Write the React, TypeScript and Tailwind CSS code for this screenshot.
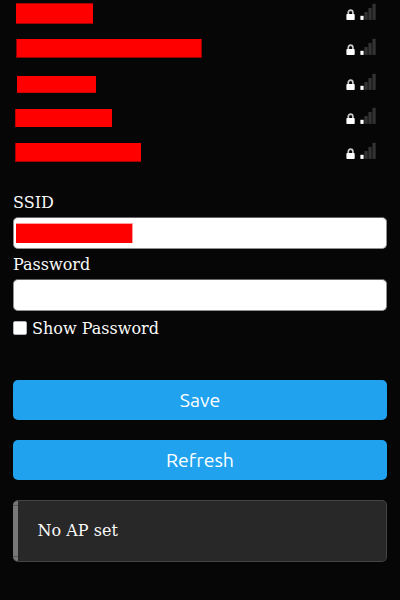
const networks = [
  { row: 'h-[25px]', bar: 'mt-[3px] ml-4 h-[21px] w-[77px] border-y border-[#a80000]' },
  { row: 'h-[35px]', bar: 'mt-[14px] ml-4 h-[19px] w-[186px] border-x border-b border-[#900000]' },
  { row: 'h-[35px]', bar: 'mt-4 ml-[17px] h-[17px] w-[79px] border-b border-[#d80000]' },
  { row: 'h-[34px]', bar: 'mt-[14px] ml-[15px] h-[18px] w-[97px] border-l border-[#c00000]' },
  { row: 'h-[35px]', bar: 'mt-[14px] ml-[15px] h-[19px] w-[126px] border-l border-b border-[#a80000]' },
];

function Lock() {
  return (
    <svg width="9" height="11" viewBox="0 0 9 11" className="mr-[5px]">
      <path d="M2.3 6V3.6a2.3 2.5 0 0 1 4.6 0V6" fill="none" stroke="#c8c8c8" strokeWidth="1.7" />
      <rect x="0.4" y="5" width="8.3" height="6" rx="0.8" fill="#fff" />
    </svg>
  );
}

function Signal() {
  return (
    <svg width="16" height="17" viewBox="0 0 16 17">
      <rect x="0.4" y="12.8" width="3.2" height="4.1" fill="#fff" />
      <rect x="4.4" y="9" width="3.3" height="7.9" fill="#333" />
      <rect x="8.4" y="5" width="3.3" height="11.9" fill="#333" />
      <rect x="12.4" y="0.8" width="3.3" height="16.1" fill="#333" />
    </svg>
  );
}

export default function App() {
  return (
    <div className="h-[600px] w-[400px] overflow-hidden bg-[#060606] text-base leading-[19px] text-[#fafafa] [font-family:'DejaVu_Serif',serif]">
      <div>
        {networks.map((n, i) => (
          <div key={i} className={`flex items-start justify-between pr-6 ${n.row}`}>
            <div className={`shrink-0 bg-[#ff0000] ${n.bar}`} />
            <div className="flex items-end self-end pb-[5px]">
              <Lock />
              <Signal />
            </div>
          </div>
        ))}
      </div>
      <form className="px-[13px] pt-[29px]" onSubmit={(e) => e.preventDefault()}>
        <label className="block h-6">SSID</label>
        <div className="flex h-8 items-center rounded-[5px] border border-[#909090] border-t-[#666] bg-white pl-0.5">
          <div className="h-5 w-[117px] border-t border-r border-[#ffa0a0] bg-[#ff0000]" />
        </div>
        <label className="mt-[6px] block h-6">Password</label>
        <input type="password" className="block h-8 w-full rounded-[5px] border border-[#909090] border-t-[#666] bg-white px-2 text-black" />
        <label className="mt-2 flex h-[19px] items-start">
          <input type="checkbox" className="mr-[5px] mt-[2px] h-[14px] w-[14px] appearance-none rounded-[2px] border border-[#b5b5bd] bg-white" />
          Show Password
        </label>
        <button className="mt-[42px] block h-10 w-full rounded-[5px] bg-[#20a2ee] text-[19.5px] text-white [font-family:Ubuntu,'Noto_Sans',sans-serif]">Save</button>
        <button className="mt-5 block h-10 w-full rounded-[5px] bg-[#20a2ee] text-[19.5px] text-white [font-family:Ubuntu,'Noto_Sans',sans-serif]">Refresh</button>
      </form>
      <div className="mx-[13px] mt-5 flex h-[62px] overflow-hidden rounded-[5px] border border-l-0 border-[#444] bg-[#282828]">
        <div className="flex w-[5px] flex-col justify-between bg-[#777] py-1">
          <div className="h-px bg-[#555]" />
          <div className="h-px bg-[#555]" />
        </div>
        <div className="pl-[19.6px] pt-5">No AP set</div>
      </div>
    </div>
  );
}
